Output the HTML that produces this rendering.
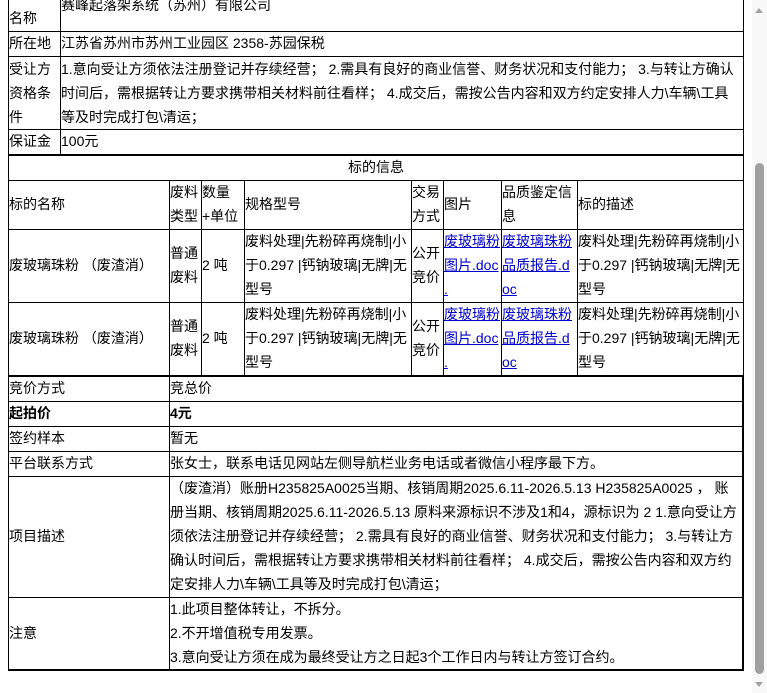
<!DOCTYPE html>
<html><head><meta charset="utf-8"><style>
html,body{margin:0;padding:0;background:#fff;width:767px;height:693px;overflow:hidden;position:relative}
.t{position:absolute;white-space:nowrap;font-size:14px;line-height:24px;font-family:"Liberation Sans","Noto Sans CJK SC",sans-serif;color:#000}
.h{position:absolute;height:1px;background:#000}
.v{position:absolute;width:1px;background:#000}
a{color:#00c;text-decoration:underline}
b{font-weight:bold}
</style></head><body>
<div class="v" style="left:8px;top:0;height:155px"></div>
<div class="v" style="left:60px;top:0;height:155px"></div>
<div class="v" style="left:743px;top:0;height:377px"></div>
<div class="h" style="left:8px;top:31px;width:736px"></div>
<div class="h" style="left:8px;top:56px;width:736px"></div>
<div class="h" style="left:8px;top:129px;width:736px"></div>
<div class="h" style="left:8px;top:154px;width:736px;height:2px"></div>
<div class="v" style="left:8px;top:154px;height:222px"></div>
<div class="h" style="left:8px;top:180px;width:736px"></div>
<div class="h" style="left:8px;top:229px;width:736px"></div>
<div class="h" style="left:8px;top:302px;width:736px"></div>
<div class="h" style="left:8px;top:375px;width:736px;height:2px"></div>
<div class="v" style="left:169px;top:180px;height:196px"></div>
<div class="v" style="left:201px;top:180px;height:196px"></div>
<div class="v" style="left:244px;top:180px;height:196px"></div>
<div class="v" style="left:411px;top:180px;height:196px"></div>
<div class="v" style="left:443px;top:180px;height:196px"></div>
<div class="v" style="left:501px;top:180px;height:196px"></div>
<div class="v" style="left:577px;top:180px;height:196px"></div>

<div class="t" style="left:9px;top:6px">名称</div>
<div class="t" style="left:61px;top:-7px">赛峰起落架系统（苏州）有限公司</div>
<div class="t" style="left:9px;top:31px">所在地</div>
<div class="t" style="left:61px;top:31px">江苏省苏州市苏州工业园区 2358-苏园保税</div>
<div class="t" style="left:9px;top:57px">受让方<br>资格条<br>件</div>
<div class="t" style="left:61px;top:57px">1.意向受让方须依法注册登记并存续经营； 2.需具有良好的商业信誉、财务状况和支付能力； 3.与转让方确认<br>时间后，需根据转让方要求携带相关材料前往看样； 4.成交后，需按公告内容和双方约定安排人力\车辆\工具<br>等及时完成打包\清运；</div>
<div class="t" style="left:9px;top:129px">保证金</div>
<div class="t" style="left:61px;top:129px">100元</div>
<div class="t" style="left:348px;top:155px">标的信息</div>

<div class="t" style="left:9px;top:192px">标的名称</div>
<div class="t" style="left:170px;top:180px">废料<br>类型</div>
<div class="t" style="left:202px;top:180px">数量<br>+单位</div>
<div class="t" style="left:245px;top:192px">规格型号</div>
<div class="t" style="left:412px;top:180px">交易<br>方式</div>
<div class="t" style="left:444px;top:192px">图片</div>
<div class="t" style="left:502px;top:180px">品质鉴定信<br>息</div>
<div class="t" style="left:578px;top:192px">标的描述</div>

<div class="t" style="left:9px;top:253px">废玻璃珠粉 （废渣消）</div>
<div class="t" style="left:170px;top:241px">普通<br>废料</div>
<div class="t" style="left:202px;top:253px">2 吨</div>
<div class="t" style="left:245px;top:229px">废料处理|先粉碎再烧制|小<br>于0.297 |钙钠玻璃|无牌|无<br>型号</div>
<div class="t" style="left:412px;top:241px">公开<br>竞价</div>
<div class="t" style="left:444px;top:229px"><a>废玻璃粉<br>图片.doc<br>.</a></div>
<div class="t" style="left:502px;top:229px"><a>废玻璃珠粉<br>品质报告.d<br>oc</a></div>
<div class="t" style="left:578px;top:229px">废料处理|先粉碎再烧制|小<br>于0.297 |钙钠玻璃|无牌|无<br>型号</div>

<div class="t" style="left:9px;top:326px">废玻璃珠粉 （废渣消）</div>
<div class="t" style="left:170px;top:314px">普通<br>废料</div>
<div class="t" style="left:202px;top:326px">2 吨</div>
<div class="t" style="left:245px;top:302px">废料处理|先粉碎再烧制|小<br>于0.297 |钙钠玻璃|无牌|无<br>型号</div>
<div class="t" style="left:412px;top:314px">公开<br>竞价</div>
<div class="t" style="left:444px;top:302px"><a>废玻璃粉<br>图片.doc<br>.</a></div>
<div class="t" style="left:502px;top:302px"><a>废玻璃珠粉<br>品质报告.d<br>oc</a></div>
<div class="t" style="left:578px;top:302px">废料处理|先粉碎再烧制|小<br>于0.297 |钙钠玻璃|无牌|无<br>型号</div>

<div class="v" style="left:8px;top:376px;height:295px"></div>
<div class="v" style="left:169px;top:376px;height:295px"></div>
<div class="v" style="left:742px;top:376px;height:295px;width:2px"></div>
<div class="h" style="left:8px;top:401px;width:735px"></div>
<div class="h" style="left:8px;top:426px;width:735px"></div>
<div class="h" style="left:8px;top:451px;width:735px"></div>
<div class="h" style="left:8px;top:476px;width:735px"></div>
<div class="h" style="left:8px;top:597px;width:735px"></div>
<div class="h" style="left:8px;top:669px;width:736px;height:2px"></div>

<div class="t" style="left:9px;top:376px">竞价方式</div>
<div class="t" style="left:170px;top:376px">竞总价</div>
<div class="t" style="left:9px;top:401px"><b>起拍价</b></div>
<div class="t" style="left:170px;top:401px"><b>4元</b></div>
<div class="t" style="left:9px;top:426px">签约样本</div>
<div class="t" style="left:170px;top:426px">暂无</div>
<div class="t" style="left:9px;top:451px">平台联系方式</div>
<div class="t" style="left:170px;top:451px">张女士，联系电话见网站左侧导航栏业务电话或者微信小程序最下方。</div>
<div class="t" style="left:9px;top:524px">项目描述</div>
<div class="t" style="left:170px;top:476px">（废渣消）账册H235825A0025当期、核销周期2025.6.11-2026.5.13 H235825A0025 ， 账<br>册当期、核销周期2025.6.11-2026.5.13 原料来源标识不涉及1和4，源标识为 2 1.意向受让方<br>须依法注册登记并存续经营； 2.需具有良好的商业信誉、财务状况和支付能力； 3.与转让方<br>确认时间后，需根据转让方要求携带相关材料前往看样； 4.成交后，需按公告内容和双方约<br>定安排人力\车辆\工具等及时完成打包\清运；</div>
<div class="t" style="left:9px;top:621px">注意</div>
<div class="t" style="left:170px;top:597px">1.此项目整体转让，不拆分。<br>2.不开增值税专用发票。<br>3.意向受让方须在成为最终受让方之日起3个工作日内与转让方签订合约。</div>

<div style="position:absolute;left:752px;top:0;width:15px;height:693px;background:#f8f8f8"></div>
<div style="position:absolute;left:755px;top:8px;width:0;height:0;border-left:4px solid transparent;border-right:4px solid transparent;border-bottom:5px solid #a3a3a3"></div>
<div style="position:absolute;left:755px;top:163px;width:9px;height:511px;background:#a0a0a0;border-radius:5px"></div>
<div style="position:absolute;left:755px;top:682px;width:0;height:0;border-left:4px solid transparent;border-right:4px solid transparent;border-top:5px solid #a3a3a3"></div>
</body></html>
